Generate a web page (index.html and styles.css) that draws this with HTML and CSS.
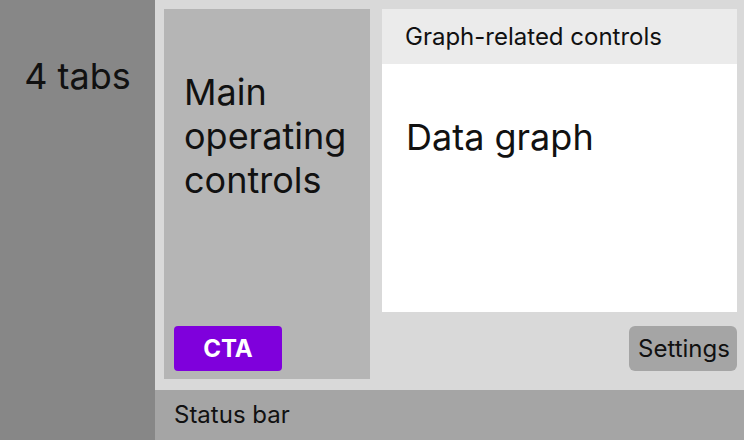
FILE: index.html
```html
<!DOCTYPE html>
<html>
<head>
<meta charset="utf-8">
<link rel="stylesheet" href="styles.css">
</head>
<body>
<div class="app">
  <aside class="tabs">4 tabs</aside>
  <div class="main">
    <div class="content">
      <section class="controls">
        <div class="controls-title">Main operating controls</div>
        <button class="cta">CTA</button>
      </section>
      <div class="right">
        <section class="graph">
          <div class="graph-header">Graph-related controls</div>
          <div class="graph-body">Data graph</div>
        </section>
        <div class="settings-row">
          <button class="settings">Settings</button>
        </div>
      </div>
    </div>
    <footer class="status">Status bar</footer>
  </div>
</div>
</body>
</html>
```
FILE: styles.css
```css
* { box-sizing: border-box; }
html, body { margin: 0; padding: 0; }
body {
  font-family: Inter, "Noto Sans", sans-serif;
  color: #111;
  width: 744px;
  height: 440px;
  overflow: hidden;
}
.app {
  display: grid;
  grid-template-columns: 155px 1fr;
  height: 440px;
}
.tabs {
  background: #878787;
  font-size: 36px;
  text-align: center;
  padding-top: 54px;
  line-height: 44px;
}
.main {
  display: flex;
  flex-direction: column;
  background: #d9d9d9;
}
.content {
  flex: 1;
  display: flex;
  gap: 12px;
  padding: 9px 7px 11px 9px;
}
.controls {
  width: 206px;
  background: #b5b5b5;
  display: flex;
  flex-direction: column;
  justify-content: space-between;
  align-items: flex-start;
  padding: 61px 10px 8px 10px;
}
.controls-title {
  font-size: 36px;
  line-height: 44px;
  padding-left: 10px;
}
.cta {
  width: 108px;
  height: 45px;
  border: none;
  border-radius: 4px;
  background: #7f00dc;
  color: #fff;
  font-family: Inter, sans-serif;
  font-weight: 700;
  font-size: 24px;
  padding: 0;
}
.right {
  flex: 1;
  display: flex;
  flex-direction: column;
  gap: 14px;
}
.graph {
  height: 303px;
  background: #fff;
  display: flex;
  flex-direction: column;
}
.graph-header {
  height: 55px;
  background: #ebebeb;
  font-size: 24px;
  line-height: 55px;
  padding-left: 23px;
}
.graph-body {
  font-size: 36px;
  padding: 51px 0 0 24px;
  line-height: 44px;
}
.settings-row {
  display: flex;
  justify-content: flex-end;
}
.settings {
  width: 108px;
  height: 45px;
  border: none;
  border-radius: 6px;
  background: #a5a5a5;
  color: #111;
  font-family: Inter, sans-serif;
  font-size: 24px;
  padding: 0 0 0 2px;
}
.status {
  height: 50px;
  background: #a5a5a5;
  font-size: 24px;
  line-height: 50px;
  padding-left: 19px;
}
```
